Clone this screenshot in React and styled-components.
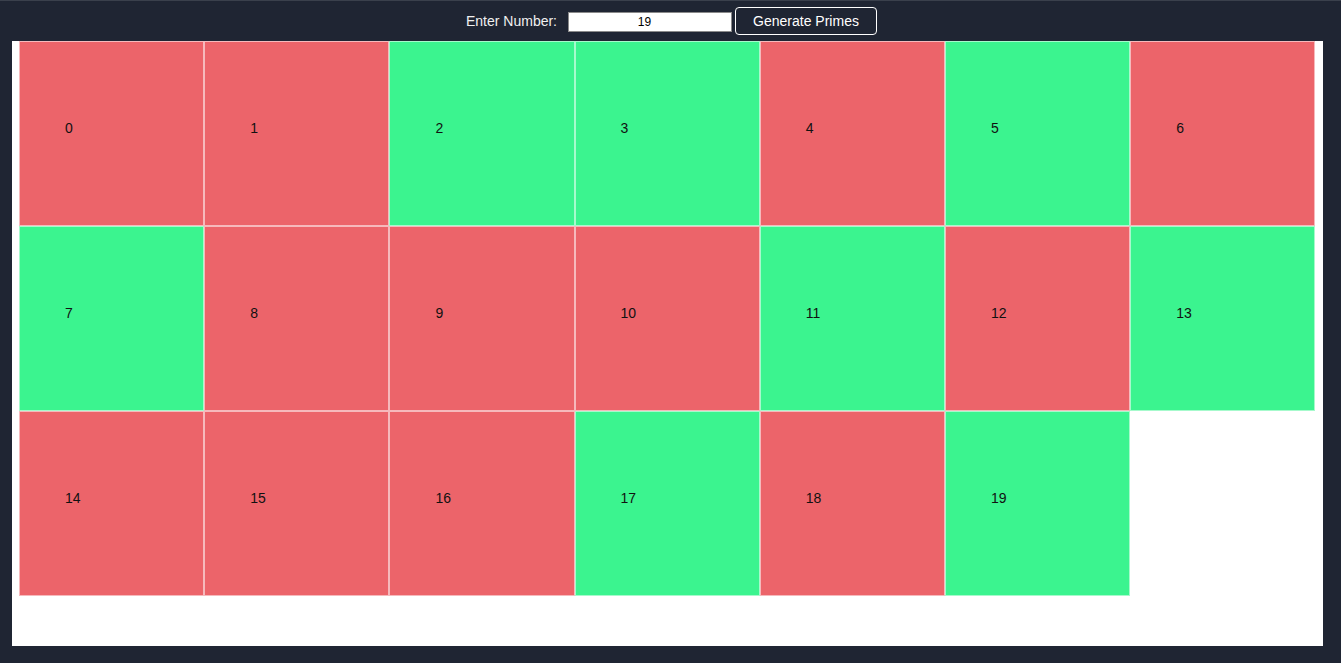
import styled, { createGlobalStyle } from 'styled-components';

const GlobalStyle = createGlobalStyle`
  html, body {
    margin: 0;
    padding: 0;
    background: #1f2533;
    font-family: "Liberation Sans", Arial, sans-serif;
  }
`

const Page = styled.div`
  height: 663px;
  border-top: 1px solid #3a404c;
  box-sizing: border-box;
  display: flex;
  flex-direction: column;
`

const Header = styled.header`
  height: 40px;
  display: flex;
  align-items: center;
  justify-content: center;
  padding: 0 0 1px 2px;
  box-sizing: border-box;
`

const Label = styled.label`
  color: #f0f0f0;
  font-size: 14px;
  margin-right: 11px;
`

const NumberInput = styled.input`
  width: 164px;
  height: 20px;
  margin-top: 2px;
  box-sizing: border-box;
  border: 1px solid #8a8a8a;
  background: #fff;
  text-align: center;
  font-family: "Liberation Sans", Arial, sans-serif;
  font-size: 12px;
  color: #000;
  padding: 0 11px 0 0;
`

const Button = styled.button`
  margin-left: 3px;
  width: 142px;
  height: 28px;
  box-sizing: border-box;
  background: #1f2533;
  color: #fff;
  border: 1px solid #fff;
  border-radius: 4px;
  font-family: "Liberation Sans", Arial, sans-serif;
  font-size: 14px;
  white-space: nowrap;
  padding: 0;
`

const Panel = styled.main`
  margin: 0 18px 0 12px;
  height: 605px;
  background: #fff;
  padding: 0 7px;
  box-sizing: border-box;
  overflow: hidden;
`

const Grid = styled.div`
  display: grid;
  grid-template-columns: repeat(7, 185.2px);
`

const Cell = styled.div`
  height: 185px;
  box-sizing: border-box;
  border: 1px solid rgba(255, 255, 255, 0.55);
  background: ${p => (p.$prime ? '#3bf48f' : '#ec646a')};
  padding: 78px 0 0 45px;
  font-size: 14px;
  color: #111;
`

const isPrime = n => {
  if (n < 2) return false
  for (let i = 2; i * i <= n; i++) if (n % i === 0) return false
  return true
}

const numbers = Array.from({ length: 20 }, (_, i) => i)

export default function App() {
  return (
    <>
      <GlobalStyle />
      <Page>
        <Header>
          <Label>Enter Number:</Label>
          <NumberInput type="text" defaultValue="19" />
          <Button>Generate Primes</Button>
        </Header>
        <Panel>
          <Grid>
            {numbers.map(n => (
              <Cell key={n} $prime={isPrime(n)}>{n}</Cell>
            ))}
          </Grid>
        </Panel>
      </Page>
    </>
  )
}
